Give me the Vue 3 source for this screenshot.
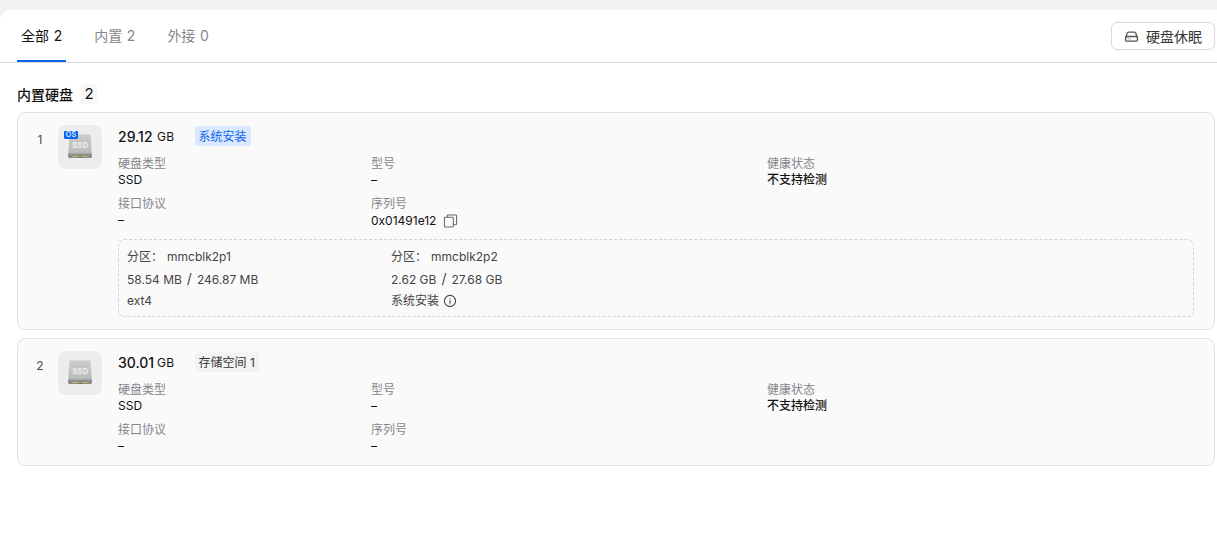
<template>
  <div class="page">
    <div class="panel">
      <div class="tabs">
        <div class="tab-list">
          <div
            v-for="(tab, index) in tabs"
            :key="tab.label"
            class="tab"
            :class="{ active: index === 0 }"
          >{{ tab.label }} {{ tab.count }}</div>
        </div>
        <button class="sleep-btn">
          <svg class="sleep-icon" viewBox="0 0 16 16" fill="none" stroke="currentColor" stroke-width="1.4">
            <path d="M2 8.8 3.4 4.4a1.6 1.6 0 0 1 1.5-1.1h6.2a1.6 1.6 0 0 1 1.5 1.1L14 8.8" />
            <rect x="1.7" y="8" width="12.6" height="5" rx="1.4" />
            <path d="M4 10.5h1M6.2 10.5h.8" stroke-width="1" />
          </svg>
          硬盘休眠
        </button>
      </div>

      <div class="content">
        <div class="group-title">
          <span>内置硬盘</span>
          <span class="group-count">2</span>
        </div>

        <div v-for="disk in disks" :key="disk.index" class="disk-card">
          <div class="disk-index">{{ disk.index }}</div>
          <div class="disk-thumb">
            <svg class="ssd" viewBox="0 0 44 44">
              <defs>
                <linearGradient id="ssdBody" x1="0" y1="0" x2="0" y2="1">
                  <stop offset="0" stop-color="#cbcbcb" />
                  <stop offset="0.76" stop-color="#bcbcbc" />
                  <stop offset="0.84" stop-color="#949494" />
                  <stop offset="1" stop-color="#7a7a7a" />
                </linearGradient>
              </defs>
              <path d="M12.5 9.5h19a1 1 0 0 1 1 1l1.5 20a2 2 0 0 1-2 2.5H12a2 2 0 0 1-2-2.5l1.500-20a1 1 0 0 1 1-1z" fill="url(#ssdBody)" />
              <rect x="14" y="15" width="16.500" height="9" rx="1" fill="#c4c4c4" />
              <text x="22.200" y="22.500" class="ssd-text">SSD</text>
              <path d="M13.500 31.700h7M24 31.700h7" stroke="#cbb465" stroke-width="1.200" />
            </svg>
            <span v-if="disk.system" class="os-badge">OS</span>
          </div>
          <div class="disk-main">
            <div class="disk-head">
              <span class="size">{{ disk.size }}</span>
              <span class="unit">GB</span>
              <span class="tag" :class="{ blue: disk.system }">{{ disk.tag }}</span>
            </div>
            <div class="info-grid">
              <div class="info">
                <div class="info-label">硬盘类型</div>
                <div class="info-value">SSD</div>
              </div>
              <div class="info">
                <div class="info-label">型号</div>
                <div class="info-value">–</div>
              </div>
              <div class="info">
                <div class="info-label">健康状态</div>
                <div class="info-value strong">不支持检测</div>
              </div>
              <div class="info">
                <div class="info-label">接口协议</div>
                <div class="info-value">–</div>
              </div>
              <div class="info">
                <div class="info-label">序列号</div>
                <div class="info-value serial">
                  {{ disk.serial }}
                  <svg v-if="disk.system" class="copy" viewBox="0 0 16 17" fill="none" stroke="#666" stroke-width="1.100">
                    <rect x="1.500" y="4.500" width="9.500" height="10.500" rx="1" />
                    <path d="M4.500 4.500V3a1 1 0 0 1 1-1h8a1 1 0 0 1 1 1v8.500a1 1 0 0 1-1 1H11" />
                  </svg>
                </div>
              </div>
            </div>
            <div v-if="disk.partitions" class="partitions">
              <div v-for="part in disk.partitions" :key="part.name" class="partition">
                <div class="part-line part-name"><span>分区：</span><span>{{ part.name }}</span></div>
                <div class="part-line">{{ part.used }}<span class="slash">/</span>{{ part.total }}</div>
                <div class="part-line part-fs">
                  {{ part.fs }}
                  <svg v-if="part.info" class="info-icon" viewBox="0 0 14 14" fill="none" stroke="#444" stroke-width="1.100">
                    <circle cx="7" cy="7" r="5.600" />
                    <path d="M7 6.200v3.600" />
                    <path d="M7 4.200v1" />
                  </svg>
                </div>
              </div>
            </div>
          </div>
        </div>
      </div>
    </div>
  </div>
</template>

<script setup>
const tabs = [
  { label: '全部', count: 2 },
  { label: '内置', count: 2 },
  { label: '外接', count: 0 }
]

const disks = [
  {
    index: 1,
    size: '29.12',
    tag: '系统安装',
    system: true,
    serial: '0x01491e12',
    partitions: [
      { name: 'mmcblk2p1', used: '58.54 MB', total: '246.87 MB', fs: 'ext4' },
      { name: 'mmcblk2p2', used: '2.62 GB', total: '27.68 GB', fs: '系统安装', info: true }
    ]
  },
  {
    index: 2,
    size: '30.01',
    tag: '存储空间 1',
    system: false,
    serial: '–'
  }
]
</script>

<style>
html,
body {
  margin: 0;
  background: #fff;
}
</style>

<style scoped>
.page {
  height: 558px;
  padding-top: 10px;
  box-sizing: border-box;
  background: #f1f2f4;
  overflow: hidden;
  font-family: Inter, "Noto Sans CJK SC", sans-serif;
  font-size: 12px;
  color: #111;
}

.panel {
  height: 100%;
  background: #fff;
  border-radius: 10px 0 0 0;
}

.tabs {
  height: 53px;
  box-sizing: border-box;
  padding: 0 2px 0 17px;
  display: flex;
  justify-content: space-between;
  border-bottom: 1px solid #dcdcdc;
}

.tab-list {
  display: flex;
  gap: 24px;
}

.tab {
  height: 52px;
  box-sizing: border-box;
  padding: 0 4px;
  line-height: 52px;
  font-size: 14px;
  word-spacing: 0.700px;
  color: #85878c;
}

.tab.active {
  color: #111;
  border-bottom: 2px solid #0a66f0;
}

.sleep-btn {
  margin-top: 12px;
  width: 104px;
  height: 28px;
  padding: 0;
  display: flex;
  align-items: center;
  justify-content: center;
  gap: 7px;
  background: #fff;
  border: 1px solid #d8d8d8;
  border-radius: 6px;
  font: inherit;
  font-size: 14px;
  color: #333;
}

.sleep-icon {
  width: 15px;
  height: 15px;
  color: #555;
}

.content {
  padding: 0 2px 0 17px;
}

.group-title {
  height: 49px;
  display: flex;
  align-items: center;
  gap: 8px;
  padding-top: 13px;
  box-sizing: border-box;
  font-size: 14px;
  font-weight: 500;
}

.group-count {
  width: 16px;
  height: 20px;
  line-height: 20px;
  text-align: center;
  border-radius: 4px;
  background: #f7f7f7;
  font-size: 15px;
  font-weight: 400;
}

.disk-card {
  display: flex;
  margin-bottom: 8px;
  padding: 12px 20px 11px 0;
  background: #fafafa;
  border: 1px solid #e3e3e3;
  border-radius: 8px;
}

.disk-index {
  width: 40px;
  padding-top: 8px;
  padding-left: 4px;
  box-sizing: border-box;
  text-align: center;
  font-size: 12px;
  line-height: 14px;
  color: #4a4a4a;
}

.disk-thumb {
  position: relative;
  width: 44px;
  height: 44px;
  flex: none;
  background: #ededed;
  border-radius: 8px;
}

.ssd {
  display: block;
  width: 44px;
  height: 44px;
}

.ssd-text {
  font-size: 7.500px;
  font-weight: 700;
  letter-spacing: 0.300px;
  fill: #eeeeee;
  text-anchor: middle;
}

.os-badge {
  position: absolute;
  left: 6px;
  top: 6px;
  width: 14px;
  height: 8px;
  line-height: 8px;
  text-align: center;
  border-radius: 1px;
  background: #0a66f0;
  color: #fff;
  font-size: 7px;
  font-weight: 500;
  letter-spacing: 0.300px;
}

.disk-main {
  flex: 1;
  margin-left: 16px;
}

.disk-head {
  height: 22px;
  display: flex;
  align-items: center;
}

.size {
  width: 35px;
  font-size: 14px;
  font-weight: 500;
  white-space: nowrap;
}

.unit {
  margin-left: 4px;
  font-size: 12px;
  letter-spacing: 0.400px;
}

.tag {
  margin-left: 20px;
  height: 20px;
  line-height: 21px;
  padding: 0 4px;
  border-radius: 4px;
  background: #f3f3f3;
  color: #333;
}

.tag.blue {
  background: #dbe8fd;
  color: #0a66f0;
}

.info-grid {
  display: grid;
  grid-template-columns: 253px 396px 1fr;
  row-gap: 8px;
  margin-top: 9px;
}

.info {
  line-height: 16px;
}

.info-label {
  color: #85878c;
}

.strong {
  font-weight: 500;
}

.serial {
  display: flex;
  align-items: center;
  gap: 7px;
}

.copy {
  width: 15px;
  height: 18px;
}

.partitions {
  display: flex;
  margin-top: 9px;
  margin-bottom: 1px;
  height: 78px;
  box-sizing: border-box;
  padding: 6px 8px;
  border: 1px dashed #d4d4d4;
  border-radius: 6px;
}

.partition {
  width: 264px;
}

.part-line {
  height: 22px;
  line-height: 22px;
  color: #444;
}

.part-name span:first-child {
  margin-right: 4px;
}

.slash {
  margin: 0 5px;
  font-size: 14px;
}

.part-fs {
  display: flex;
  align-items: center;
  gap: 4px;
}

.info-icon {
  width: 14px;
  height: 14px;
}
</style>
